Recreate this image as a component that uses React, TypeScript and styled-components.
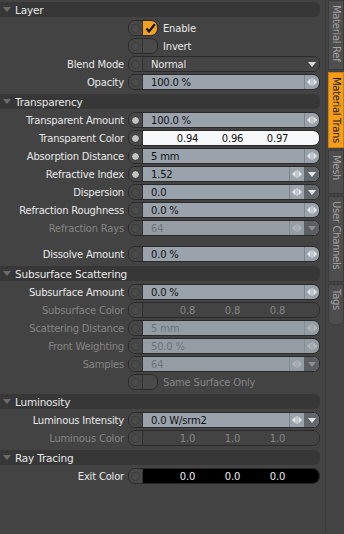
import styled, { createGlobalStyle } from 'styled-components'

type Tone = 'white' | 'black' | 'empty'

type RowSpec =
  | { kind: 'num'; label: string; value: string; lit?: boolean; off?: boolean; drop?: boolean }
  | { kind: 'rgb'; label: string; values: string[]; tone: Tone; lit?: boolean; off?: boolean }
  | { kind: 'select'; label: string; value: string }
  | { kind: 'check'; label: string; checked?: boolean; off?: boolean }
  | { kind: 'gap' }

type Section = { title: string; rows: RowSpec[] }

const SECTIONS: Section[] = [
  {
    title: 'Layer',
    rows: [
      { kind: 'check', label: 'Enable', checked: true },
      { kind: 'check', label: 'Invert' },
      { kind: 'select', label: 'Blend Mode', value: 'Normal' },
      { kind: 'num', label: 'Opacity', value: '100.0 %' },
    ],
  },
  {
    title: 'Transparency',
    rows: [
      { kind: 'num', label: 'Transparent Amount', value: '100.0 %', lit: true },
      { kind: 'rgb', label: 'Transparent Color', values: ['0.94', '0.96', '0.97'], tone: 'white', lit: true },
      { kind: 'num', label: 'Absorption Distance', value: '5 mm', lit: true },
      { kind: 'num', label: 'Refractive Index', value: '1.52', lit: true, drop: true },
      { kind: 'num', label: 'Dispersion', value: '0.0', drop: true },
      { kind: 'num', label: 'Refraction Roughness', value: '0.0 %' },
      { kind: 'num', label: 'Refraction Rays', value: '64', off: true, drop: true },
      { kind: 'gap' },
      { kind: 'num', label: 'Dissolve Amount', value: '0.0 %' },
    ],
  },
  {
    title: 'Subsurface Scattering',
    rows: [
      { kind: 'num', label: 'Subsurface Amount', value: '0.0 %' },
      { kind: 'rgb', label: 'Subsurface Color', values: ['0.8', '0.8', '0.8'], tone: 'empty', off: true },
      { kind: 'num', label: 'Scattering Distance', value: '5 mm', off: true },
      { kind: 'num', label: 'Front Weighting', value: '50.0 %', off: true },
      { kind: 'num', label: 'Samples', value: '64', off: true, drop: true },
      { kind: 'check', label: 'Same Surface Only', off: true },
    ],
  },
  {
    title: 'Luminosity',
    rows: [
      { kind: 'num', label: 'Luminous Intensity', value: '0.0 W/srm2', drop: true },
      { kind: 'rgb', label: 'Luminous Color', values: ['1.0', '1.0', '1.0'], tone: 'empty', off: true },
    ],
  },
  {
    title: 'Ray Tracing',
    rows: [{ kind: 'rgb', label: 'Exit Color', values: ['0.0', '0.0', '0.0'], tone: 'black' }],
  },
]

const TABS = [
  { label: 'Material Ref', height: 70 },
  { label: 'Material Trans', height: 76, active: true },
  { label: 'Mesh', height: 44 },
  { label: 'User Channels', height: 86 },
  { label: 'Tags', height: 41 },
]

const GlobalStyle = createGlobalStyle`
  html, body {
    margin: 0;
    padding: 0;
    background: #434343;
  }
  body {
    font-family: 'DejaVu Sans', 'Liberation Sans', sans-serif;
    font-size: 10px;
    letter-spacing: -0.2px;
  }
`

const Shell = styled.div`
  display: flex;
  width: 344px;
  height: 534px;
  overflow: hidden;
  background: #434343;
`

const Panel = styled.div`
  width: 325px;
  display: flex;
  flex-direction: column;
`

const SectionHead = styled.div<{ $first?: boolean }>`
  display: flex;
  align-items: center;
  gap: 4px;
  width: 320px;
  height: 15px;
  margin: ${({ $first }) => ($first ? '2px 0 2px' : '3px 0 2px')};
  padding-left: 3px;
  box-sizing: border-box;
  background: #373737;
  border-radius: 0 6px 6px 0;
  color: #e6e6e6;
  font-size: 10.5px;
`

const Row = styled.div`
  display: grid;
  grid-template-columns: 124px 192px;
  column-gap: 4px;
  align-items: center;
  height: 18px;
`

const Gap = styled.div`
  height: 8px;
`

const Label = styled.span<{ $off?: boolean }>`
  text-align: right;
  white-space: nowrap;
  color: ${({ $off }) => ($off ? '#858585' : '#e8e8e8')};
`

const Control = styled.div<{ $width?: number }>`
  display: flex;
  width: ${({ $width }) => ($width ? `${$width}px` : '100%')};
  height: 16px;
  box-sizing: border-box;
  border: 1px solid #2a2a2a;
  border-radius: 7px;
  overflow: hidden;
`

const Cap = styled.div`
  flex: 0 0 13px;
  display: flex;
  align-items: center;
  justify-content: center;
  background: #484848;
  border-right: 1px solid #303030;
`

const Dot = styled.span<{ $lit?: boolean }>`
  width: 9px;
  height: 9px;
  box-sizing: border-box;
  border-radius: 50%;
  background: ${({ $lit }) => ($lit ? '#c2c2c2' : '#4b4b4b')};
  border: 1px solid ${({ $lit }) => ($lit ? '#2c2c2c' : '#3b3b3b')};
`

const Field = styled.div<{ $bg: string; $fg: string }>`
  flex: 1;
  display: flex;
  align-items: center;
  min-width: 0;
  padding-left: 8px;
  background: ${({ $bg }) => $bg};
  color: ${({ $fg }) => $fg};
  white-space: nowrap;
`

const FieldText = styled.span`
  flex: 1;
`

const Spin = styled.div<{ $off?: boolean }>`
  flex: 0 0 14px;
  align-self: stretch;
  display: flex;
  align-items: center;
  justify-content: center;
  border-left: 1px solid ${({ $off }) => ($off ? '#858d94' : '#7d868e')};
`

const Drop = styled.div<{ $off?: boolean; $bare?: boolean }>`
  flex: 0 0 15px;
  align-self: stretch;
  display: flex;
  align-items: center;
  justify-content: center;
  background: ${({ $off, $bare }) => ($bare ? 'transparent' : $off ? '#5b5f63' : '#62676c')};
`

const Triplet = styled.div<{ $fg: string }>`
  display: grid;
  grid-template-columns: repeat(3, 45px);
  padding-left: 14px;
  color: ${({ $fg }) => $fg};
  > span {
    text-align: center;
  }
`

const CheckBox = styled.div<{ $on?: boolean }>`
  flex: 1;
  display: flex;
  align-items: center;
  justify-content: center;
  background: ${({ $on }) => ($on ? '#f4a122' : '#4a4a4a')};
`

const CheckCell = styled.div`
  display: flex;
  align-items: center;
  gap: 5px;
`

const TabRail = styled.div`
  width: 19px;
  padding-left: 2px;
  box-sizing: border-box;
  display: flex;
  flex-direction: column;
  border-left: 1px solid #3a3a3a;
`

const Tab = styled.div<{ $active?: boolean; $last?: boolean; $h: number }>`
  width: 16px;
  height: ${({ $h }) => $h}px;
  flex: 0 0 auto;
  box-sizing: border-box;
  padding-top: 4px;
  margin-bottom: 2px;
  overflow: hidden;
  white-space: nowrap;
  writing-mode: vertical-rl;
  text-align: left;
  background: ${({ $active }) => ($active ? '#f39d1b' : '#4e4e4e')};
  color: ${({ $active }) => ($active ? '#1c1c1c' : '#a3a3a3')};
  border: 1px solid ${({ $active }) => ($active ? '#c97f12' : '#3b3b3b')};
  border-radius: ${({ $last }) => ($last ? '0 0 5px 5px' : '0')};
  font-size: 10px;
  letter-spacing: -0.3px;
  line-height: 14px;
`

const Caret = ({ color }: { color: string }) => (
  <svg width="8" height="5" viewBox="0 0 8 5">
    <path d="M0 0 L8 0 L4 5 Z" fill={color} />
  </svg>
)

const SpinArrows = ({ off }: { off?: boolean }) => {
  const c = off ? '#b3b9be' : '#e3e7ea'
  return (
    <svg width="12" height="10" viewBox="0 0 12 10">
      <path d="M4.5 1.5 L1 5 L4.5 8.5 Z" fill={c} />
      <rect x="5.5" y="1" width="1" height="8" fill={c} />
      <path d="M7.5 1.5 L11 5 L7.5 8.5 Z" fill={c} />
    </svg>
  )
}

const Tick = () => (
  <svg width="11" height="10" viewBox="0 0 11 10">
    <path d="M1.5 5.5 L4 8.5 L9.8 1.2" stroke="#111" strokeWidth="2.2" fill="none" />
  </svg>
)

const toneColors = (tone: Tone, off?: boolean) => {
  if (tone === 'white') return { bg: '#f7f8f9', fg: '#111' }
  if (tone === 'black') return { bg: '#000', fg: '#e9eef3' }
  return { bg: '#434343', fg: off ? '#858585' : '#d0d0d0' }
}

const SpecRow = ({ spec }: { spec: RowSpec }) => {
  if (spec.kind === 'gap') return <Gap />

  if (spec.kind === 'check') {
    return (
      <Row>
        <span />
        <CheckCell>
          <Control $width={30}>
            <Cap>
              <Dot />
            </Cap>
            <CheckBox $on={spec.checked}>{spec.checked ? <Tick /> : null}</CheckBox>
          </Control>
          <Label $off={spec.off}>{spec.label}</Label>
        </CheckCell>
      </Row>
    )
  }

  if (spec.kind === 'select') {
    return (
      <Row>
        <Label>{spec.label}</Label>
        <Control>
          <Cap>
            <Dot />
          </Cap>
          <Field $bg="#454545" $fg="#e8e8e8">
            <FieldText>{spec.value}</FieldText>
            <Drop $bare>
              <Caret color="#dcdcdc" />
            </Drop>
          </Field>
        </Control>
      </Row>
    )
  }

  if (spec.kind === 'rgb') {
    const { bg, fg } = toneColors(spec.tone, spec.off)
    return (
      <Row>
        <Label $off={spec.off}>{spec.label}</Label>
        <Control>
          <Cap>
            <Dot $lit={spec.lit} />
          </Cap>
          <Field $bg={bg} $fg={fg}>
            <Triplet $fg={fg}>
              {spec.values.map((v, i) => (
                <span key={i}>{v}</span>
              ))}
            </Triplet>
          </Field>
        </Control>
      </Row>
    )
  }

  return (
    <Row>
      <Label $off={spec.off}>{spec.label}</Label>
      <Control>
        <Cap>
          <Dot $lit={spec.lit} />
        </Cap>
        <Field $bg={spec.off ? '#949ca4' : '#9aa3ac'} $fg={spec.off ? '#6c747b' : '#111'}>
          <FieldText>{spec.value}</FieldText>
          <Spin $off={spec.off}>
            <SpinArrows off={spec.off} />
          </Spin>
          {spec.drop ? (
            <Drop $off={spec.off}>
              <Caret color={spec.off ? '#8a8e92' : '#e6e6e6'} />
            </Drop>
          ) : null}
        </Field>
      </Control>
    </Row>
  )
}

export default function App() {
  return (
    <>
      <GlobalStyle />
      <Shell>
        <Panel>
          {SECTIONS.map((section, i) => (
            <div key={section.title}>
              <SectionHead $first={i === 0}>
                <Caret color="#6d6d6d" />
                <span>{section.title}</span>
              </SectionHead>
              {section.rows.map((row, j) => (
                <SpecRow key={j} spec={row} />
              ))}
            </div>
          ))}
        </Panel>
        <TabRail>
          {TABS.map((tab, i) => (
            <Tab key={tab.label} $h={tab.height} $active={tab.active} $last={i === TABS.length - 1}>
              {tab.label}
            </Tab>
          ))}
        </TabRail>
      </Shell>
    </>
  )
}
